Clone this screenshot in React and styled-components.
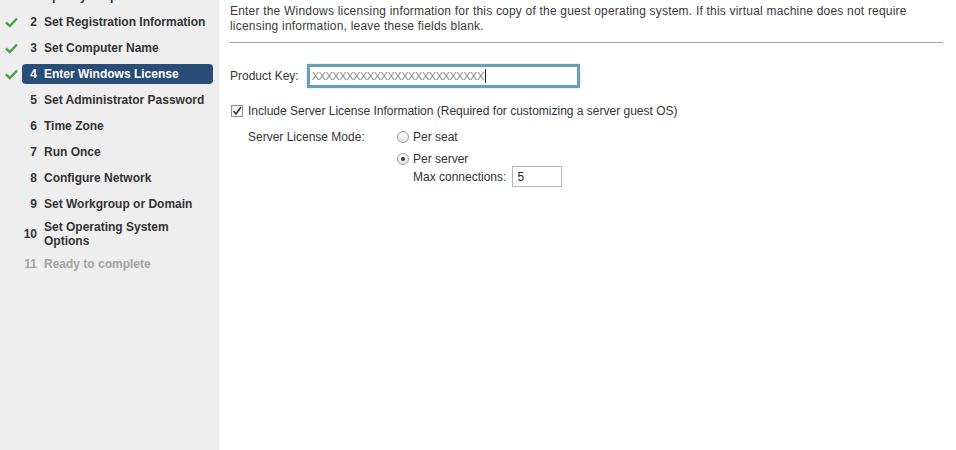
import React from "react";
import styled, { createGlobalStyle } from "styled-components";

const Global = createGlobalStyle`
  html, body { margin: 0; padding: 0; background: #fff; }
  body { font-family: "Liberation Sans", Arial, sans-serif; color: #333; overflow: hidden; }
`;

const Page = styled.div`
  display: flex;
  width: 956px;
  height: 450px;
  overflow: hidden;
`;

const Sidebar = styled.nav`
  width: 219px;
  flex: none;
  background: #eeeeee;
  border-right: 1px solid #f6f6f6;
  overflow: hidden;
`;

const StepList = styled.ul`
  list-style: none;
  margin: -17px 0 0;
  padding: 0;
`;

const Step = styled.li`
  display: flex;
  align-items: center;
  height: ${(p) => (p.$tall ? 34 : 26)}px;
  padding-left: 5px;
`;

const Check = styled.span`
  width: 14px;
  height: 12px;
  flex: none;
  display: flex;
  align-items: center;
`;

const StepBody = styled.div`
  display: flex;
  align-items: center;
  margin-left: 3px;
  width: 191px;
  height: 20px;
  border-radius: 4px;
  background: ${(p) => (p.$active ? "#2a4d77" : "transparent")};
  color: ${(p) => (p.$active ? "#fff" : p.$disabled ? "#a3a3a3" : "#333")};
  font-size: 12px;
  font-weight: bold;
`;

const Num = styled.span`
  width: 15px;
  text-align: right;
  flex: none;
`;

const Label = styled.span`
  margin-left: 7px;
  line-height: 14px;
  max-width: ${(p) => (p.$wrap ? "130px" : "none")};
`;

const Main = styled.main`
  flex: 1;
  padding: 4px 0 0 10px;
  font-size: 12px;
`;

const Intro = styled.p`
  margin: 0;
  width: 713px;
  line-height: 15px;
  letter-spacing: 0.2px;
  color: #3a3a3a;
  padding-bottom: 8px;
  border-bottom: 1px solid #a5a5a5;
`;

const KeyRow = styled.div`
  display: flex;
  align-items: center;
  margin-top: 21px;
  gap: 8px;
`;

const KeyInput = styled.div`
  box-sizing: border-box;
  width: 273px;
  height: 24px;
  border: 3px solid #6b9fb6;
  box-shadow: 0 0 2px #a9dbe9;
  display: flex;
  align-items: center;
  padding-left: 2px;
  font-size: 11px;
  letter-spacing: -0.45px;
  color: #888;
`;

const Caret = styled.span`
  display: inline-block;
  width: 1px;
  height: 14px;
  background: #222;
  margin-left: 1px;
`;

const CheckRow = styled.label`
  display: flex;
  align-items: center;
  margin-top: 16px;
  gap: 5px;
  margin-left: 1px;
`;

const Box = styled.span`
  width: 12px;
  height: 12px;
  box-sizing: border-box;
  border: 1px solid #8f8f8f;
  background: #f7f7f7;
  display: flex;
  align-items: center;
  justify-content: center;
`;

const ModeGrid = styled.div`
  display: grid;
  grid-template-columns: 149px auto;
  margin-left: 18px;
  margin-top: 8px;
`;

const ModeLabel = styled.div`
  padding-top: 4px;
`;

const Options = styled.div`
  display: flex;
  flex-direction: column;
`;

const RadioRow = styled.div`
  display: flex;
  align-items: center;
  gap: 4px;
  height: 22px;
`;

const Radio = styled.span`
  width: 12px;
  height: 12px;
  box-sizing: border-box;
  border-radius: 50%;
  border: 1px solid #9a9a9a;
  background: linear-gradient(#fbfbfb, #e6e6e6);
  display: flex;
  align-items: center;
  justify-content: center;
  &::after {
    content: "";
    width: 4px;
    height: 4px;
    border-radius: 50%;
    background: ${(p) => (p.$checked ? "#333" : "transparent")};
  }
`;

const MaxRow = styled.div`
  display: flex;
  align-items: center;
  gap: 6px;
  margin-left: 16px;
  margin-top: -4px;
`;

const SmallInput = styled.div`
  box-sizing: border-box;
  width: 50px;
  height: 21px;
  border: 1px solid #b5b5b5;
  padding-left: 4px;
  display: flex;
  align-items: center;
  color: #222;
`;

const steps = [
  { n: 1, label: "Specify Properties" },
  { n: 2, label: "Set Registration Information", done: true },
  { n: 3, label: "Set Computer Name", done: true },
  { n: 4, label: "Enter Windows License", done: true, active: true },
  { n: 5, label: "Set Administrator Password" },
  { n: 6, label: "Time Zone" },
  { n: 7, label: "Run Once" },
  { n: 8, label: "Configure Network" },
  { n: 9, label: "Set Workgroup or Domain" },
  { n: 10, label: "Set Operating System Options", tall: true },
  { n: 11, label: "Ready to complete", disabled: true },
];

const CheckMark = () => (
  <svg width="13" height="11" viewBox="0 0 13 11">
    <path d="M1 5.5 L4.8 9 L12 1.5" fill="none" stroke="#4aa344" strokeWidth="2.4" />
  </svg>
);

export default function App() {
  return (
    <Page>
      <Global />
      <Sidebar>
        <StepList>
          {steps.map((s) => (
            <Step key={s.n} $tall={s.tall}>
              <Check>{s.done && <CheckMark />}</Check>
              <StepBody $active={s.active} $disabled={s.disabled}>
                <Num>{s.n}</Num>
                <Label $wrap={s.tall}>{s.label}</Label>
              </StepBody>
            </Step>
          ))}
        </StepList>
      </Sidebar>
      <Main>
        <Intro>
          Enter the Windows licensing information for this copy of the guest operating system. If this virtual machine does not require
          licensing information, leave these fields blank.
        </Intro>
        <KeyRow>
          <span>Product Key:</span>
          <KeyInput>
            XXXXXXXXXXXXXXXXXXXXXXXXX
            <Caret />
          </KeyInput>
        </KeyRow>
        <CheckRow>
          <Box>
            <svg width="10" height="10" viewBox="0 0 10 10">
              <path d="M1.5 5 L4 8 L9 1" fill="none" stroke="#333" strokeWidth="1.6" />
            </svg>
          </Box>
          <span>Include Server License Information (Required for customizing a server guest OS)</span>
        </CheckRow>
        <ModeGrid>
          <ModeLabel>Server License Mode:</ModeLabel>
          <Options>
            <RadioRow>
              <Radio />
              <span>Per seat</span>
            </RadioRow>
            <RadioRow>
              <Radio $checked />
              <span>Per server</span>
            </RadioRow>
            <MaxRow>
              <span>Max connections:</span>
              <SmallInput>5</SmallInput>
            </MaxRow>
          </Options>
        </ModeGrid>
      </Main>
    </Page>
  );
}
